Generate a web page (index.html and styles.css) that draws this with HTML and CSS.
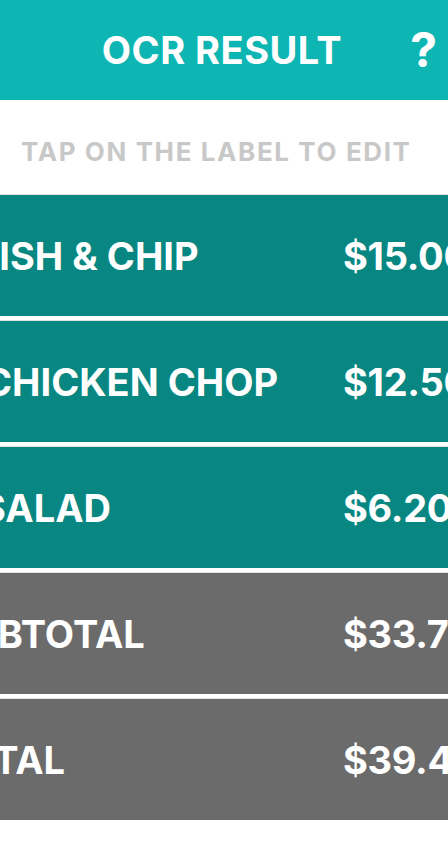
FILE: index.html
```html
<!DOCTYPE html>
<html lang="en">
<head>
<meta charset="utf-8">
<title>OCR Result</title>
<link rel="stylesheet" href="styles.css">
</head>
<body>
<header class="topbar">
  <span class="topbar-spacer"></span>
  <h1 class="title">OCR RESULT</h1>
  <span class="help">?</span>
</header>
<p class="hint">TAP ON THE LABEL TO EDIT</p>
<ul class="items">
  <li class="item item--food"><span class="label label--fish">FISH &amp; CHIP</span><span class="price">$15.00</span></li>
  <li class="item item--food"><span class="label label--chicken">CHICKEN CHOP</span><span class="price">$12.50</span></li>
  <li class="item item--food"><span class="label label--salad">SALAD</span><span class="price">$6.20</span></li>
  <li class="item item--sum"><span class="label label--subtotal">SUBTOTAL</span><span class="price">$33.70</span></li>
  <li class="item item--sum"><span class="label label--total">TOTAL</span><span class="price">$39.40</span></li>
</ul>
</body>
</html>
```

FILE: styles.css
```css
html, body {
  margin: 0;
  padding: 0;
  background: #ffffff;
}
body {
  width: 448px;
  overflow: hidden;
  font-family: "Inter", "Liberation Sans", sans-serif;
  font-weight: 700;
}
.topbar {
  height: 100px;
  background: #0db5b3;
  display: grid;
  grid-template-columns: 1fr auto 1fr;
  align-items: center;
  color: #ffffff;
}
.title {
  margin: 0 0 0 -4px;
  font-size: 38px;
  font-weight: 700;
  line-height: 1;
  letter-spacing: 0.5px;
}
.help {
  justify-self: end;
  padding-right: 11px;
  font-size: 48px;
  line-height: 1;
}
.hint {
  margin: 0;
  height: 94px;
  box-sizing: border-box;
  padding: 8px 0 0 21px;
  display: flex;
  align-items: center;
  font-size: 26px;
  letter-spacing: 1.6px;
  color: #c8c8c8;
  white-space: nowrap;
}
.items {
  list-style: none;
  margin: 0;
  padding: 0;
}
.item {
  height: 121px;
  margin-top: 4px;
  border-top: 1px solid #e2e2e2;
  display: grid;
  grid-template-columns: 343px 1fr;
  align-items: center;
  overflow: hidden;
  white-space: nowrap;
  color: #ffffff;
  font-size: 38px;
}
.item:first-child {
  margin-top: 0;
}
.item--food {
  background: #088782;
}
.item--sum {
  background: #6b6b6b;
}
.price {
  letter-spacing: -0.3px;
}
.label--fish {
  margin-left: -23px;
}
.label--chicken {
  margin-left: -16px;
}
.label--salad {
  margin-left: -19px;
}
.label--subtotal {
  margin-left: -55px;
}
.label--total {
  margin-left: -59px;
}
```
